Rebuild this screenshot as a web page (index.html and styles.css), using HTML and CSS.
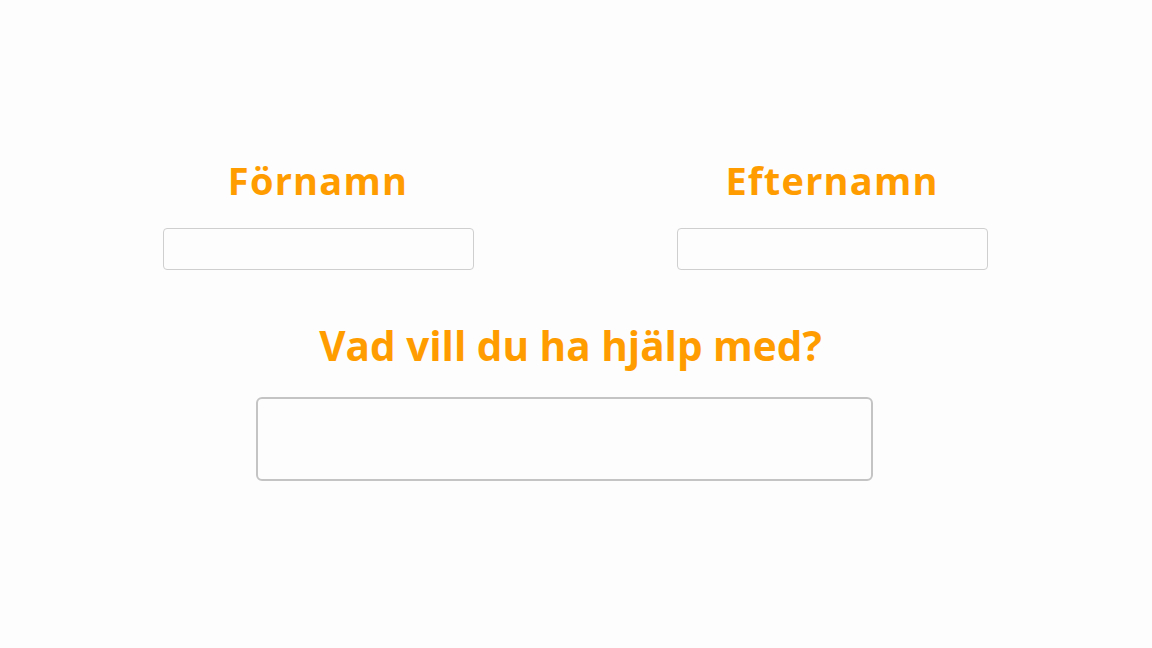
FILE: index.html
```html
<!DOCTYPE html>
<html lang="sv">
<head>
<meta charset="utf-8">
<title>Kontakt</title>
<link rel="stylesheet" href="styles.css">
</head>
<body>
<main class="form">
  <div class="name-row">
    <div class="field">
      <label class="label" for="fn">Förnamn</label>
      <input class="input" id="fn" type="text">
    </div>
    <div class="field">
      <label class="label" for="en">Efternamn</label>
      <input class="input" id="en" type="text">
    </div>
  </div>
  <div class="help">
    <label class="label label-big" for="help">Vad vill du ha hjälp med?</label>
    <textarea class="area" id="help"></textarea>
  </div>
</main>
</body>
</html>
```

FILE: styles.css
```css
html, body {
  margin: 0;
  padding: 0;
}
body {
  width: 1152px;
  height: 648px;
  background: #fdfdfd;
  font-family: "Open Sans", "Liberation Sans", sans-serif;
  overflow: hidden;
}
.form {
  display: flex;
  flex-direction: column;
  padding-top: 154px;
}
.name-row {
  display: flex;
  gap: 204px;
  padding-left: 163px;
}
.field {
  width: 310px;
  display: flex;
  flex-direction: column;
  align-items: center;
}
.label {
  color: #ff9d00;
  font-weight: 700;
  font-size: 38px;
  line-height: 52px;
  letter-spacing: 1.2px;
}
.input {
  box-sizing: border-box;
  margin-top: 22px;
  width: 311px;
  height: 42px;
  border: 1px solid #cfcfcf;
  border-radius: 4px;
  background: #fdfdfd;
}
.help {
  display: flex;
  flex-direction: column;
  align-items: center;
  width: 617px;
  margin-left: 256px;
  margin-top: 48px;
}
.label-big {
  font-size: 40.5px;
  line-height: 56px;
  letter-spacing: 0;
  margin-left: 12px;
}
.area {
  box-sizing: border-box;
  margin-top: 23px;
  width: 617px;
  height: 84px;
  border: 2px solid #c4c4c4;
  border-radius: 6px;
  background: #fdfdfd;
  resize: none;
}
```
